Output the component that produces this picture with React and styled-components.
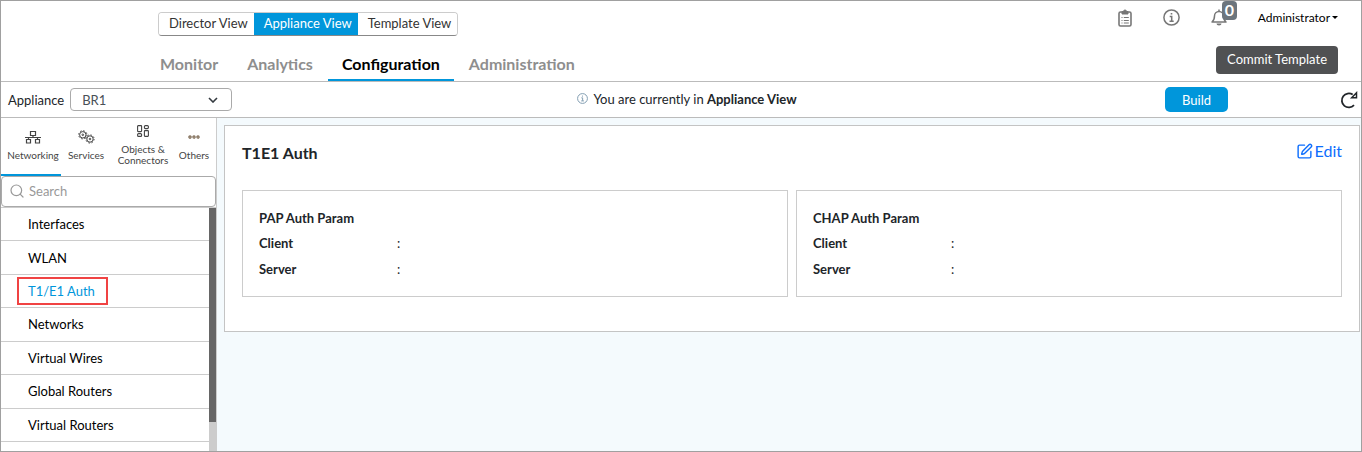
import React from 'react';
import styled, { createGlobalStyle, css } from 'styled-components';
import { Search, SquarePen } from 'lucide-react';

const views = ['Director View', 'Appliance View', 'Template View'];
const sections = ['Monitor', 'Analytics', 'Configuration', 'Administration'];
const menuItems = [
  'Interfaces',
  'WLAN',
  'T1/E1 Auth',
  'Networks',
  'Virtual Wires',
  'Global Routers',
  'Virtual Routers',
];
const params = ['PAP Auth Param', 'CHAP Auth Param'];

const ClipboardIcon = () => (
  <svg width="14" height="18" viewBox="0 0 14 18" fill="none" stroke="currentColor" strokeWidth="1.6">
    <rect x="1" y="3" width="12" height="14" rx="1.5" />
    <path d="M4 3.5V2.5h1.5a1.5 1.5 0 0 1 3 0H10v2.5H4z" fill="currentColor" strokeWidth="1" />
    <path d="M3.5 8.500h1M5.8 8.500h5M3.5 11.500h1M5.8 11.500h5M3.5 14h1M5.8 14h5" strokeWidth="1.1" />
  </svg>
);

const InfoIcon = ({ size }) => (
  <svg width={size} height={size} viewBox="0 0 17 17" fill="none" stroke="currentColor" strokeWidth="1.5">
    <circle cx="8.5" cy="8.5" r="7.6" />
    <path d="M6.700 7.500h2v4.500M6.500 12.200h4.200M7.700 4.800h1.600" />
  </svg>
);

const BellIcon = () => (
  <svg width="16" height="17" viewBox="0 0 16 17" fill="none" stroke="currentColor" strokeWidth="1.5">
    <path d="M1 13c2-1.600 2.500-3 2.500-6a4.500 4.500 0 0 1 9 0c0 3 .500 4.400 2.500 6z" strokeLinejoin="round" />
    <path d="M8 .5V2.500" />
    <path d="M5.500 14.500h5a2.500 2 0 0 1-5 0z" fill="currentColor" stroke="none" />
  </svg>
);

const RefreshIcon = () => (
  <svg width="18" height="18" viewBox="0 0 18 18" fill="none" stroke="currentColor" strokeWidth="1.8">
    <path d="M14 14.200A7 7 0 1 1 12.700 3.600" />
    <path d="M11.700 6.700h4.800V1.800z" strokeWidth="1.500" />
  </svg>
);

const NetworkIcon = () => (
  <svg width="16" height="14" viewBox="0 0 16 14" fill="none" stroke="currentColor" strokeWidth="1.2">
    <path d="M5.5 1.500h5v4h-5zM1.500 9.500h4v3.500h-4zM10.500 9.500h4v3.500h-4zM8 5.500v2M0 7.500h16M3.500 7.500v2M12.500 7.500v2" />
  </svg>
);

const GearsIcon = () => (
  <svg width="17" height="14" viewBox="0 0 17 14" fill="none" stroke="currentColor">
    <circle cx="4.800" cy="4.800" r="3.200" />
    <circle cx="4.800" cy="4.800" r="4.100" strokeDasharray="1.500 1.720" />
    <circle cx="4.800" cy="4.800" r=".8" />
    <circle cx="12" cy="9" r="3.200" />
    <circle cx="12" cy="9" r="4.100" strokeDasharray="1.500 1.720" />
    <circle cx="12" cy="9" r=".8" />
  </svg>
);

const ObjectsIcon = () => (
  <svg width="12" height="12" viewBox="0 0 12 12" fill="none" stroke="currentColor" strokeWidth="1.1">
    <rect x=".6" y=".6" width="4" height="6" rx=".6" />
    <rect x="7.400" y=".6" width="4" height="3" rx="1" />
    <rect x=".6" y="8.600" width="4" height="2.800" rx="1" />
    <rect x="7.400" y="5.600" width="4" height="5.800" rx=".6" />
  </svg>
);

const DotsIcon = () => (
  <svg width="12" height="4" viewBox="0 0 12 4" fill="none" stroke="#7a6650" strokeWidth="1.2">
    <circle cx="2" cy="2" r="1.100" />
    <circle cx="6" cy="2" r="1.100" />
    <circle cx="10" cy="2" r="1.100" />
  </svg>
);

const groups = [
  { label: 'Networking', icon: <NetworkIcon />, width: 60 },
  { label: 'Services', icon: <GearsIcon />, width: 50 },
  { label: 'Objects & Connectors', icon: <ObjectsIcon />, width: 64 },
  { label: 'Others', icon: <DotsIcon />, width: 38 },
];

const App = () => (
  <Page>
    <GlobalStyle />
    <Header>
      <Navigation>
        <ViewSwitch>
          {views.map((view) => (
            <ViewButton key={view} type="button" $active={view === 'Appliance View'}>{view}</ViewButton>
          ))}
        </ViewSwitch>
        <Sections>
          {sections.map((section) => (
            <SectionLink key={section} href="#" $active={section === 'Configuration'}>{section}</SectionLink>
          ))}
        </Sections>
      </Navigation>
      <Account>
        <AccountRow>
          <IconButton type="button" aria-label="Tasks"><ClipboardIcon /></IconButton>
          <IconButton type="button" aria-label="Information"><InfoIcon size={17} /></IconButton>
          <IconButton type="button" aria-label="Notifications">
            <BellIcon />
            <Badge>0</Badge>
          </IconButton>
          <UserButton type="button">Administrator</UserButton>
        </AccountRow>
        <CommitButton type="button">Commit Template</CommitButton>
      </Account>
    </Header>
    <Toolbar>
      <ApplianceField>
        <label htmlFor="appliance">Appliance</label>
        <SelectBox>
          <Select id="appliance" defaultValue="BR1">
            <option>BR1</option>
          </Select>
          <Chevron viewBox="0 0 10 6"><path d="M1 1l4 4 4-4" /></Chevron>
        </SelectBox>
      </ApplianceField>
      <Notice>
        <NoticeIcon><InfoIcon size={11} /></NoticeIcon>
        <span>You are currently in <b>Appliance View</b></span>
      </Notice>
      <ToolbarActions>
        <BuildButton type="button">Build</BuildButton>
        <RefreshButton type="button" aria-label="Refresh"><RefreshIcon /></RefreshButton>
      </ToolbarActions>
    </Toolbar>
    <Body>
      <Sidebar>
        <Groups>
          {groups.map(({ label, icon, width }) => (
            <GroupButton key={label} type="button" $width={width} $active={label === 'Networking'}>
              <GroupIcon>{icon}</GroupIcon>
              <span>{label}</span>
            </GroupButton>
          ))}
        </Groups>
        <SearchBox>
          <Search size={16} strokeWidth={1.8} />
          <SearchInput type="text" placeholder="Search" aria-label="Search" />
        </SearchBox>
        <MenuArea>
          <Menu>
            {menuItems.map((item) => (
              <MenuItem key={item}>
                <MenuLink href="#" $active={item === 'T1/E1 Auth'}>{item}</MenuLink>
              </MenuItem>
            ))}
          </Menu>
          <ScrollTrack><ScrollThumb /></ScrollTrack>
        </MenuArea>
      </Sidebar>
      <Main>
        <Panel>
          <PanelHeader>
            <Title>T1E1 Auth</Title>
            <EditButton type="button"><SquarePen size={17} />Edit</EditButton>
          </PanelHeader>
          <Cards>
            {params.map((param) => (
              <Card key={param}>
                <CardTitle>{param}</CardTitle>
                <Fields>
                  <dt>Client</dt>
                  <dd>:</dd>
                  <dt>Server</dt>
                  <dd>:</dd>
                </Fields>
              </Card>
            ))}
          </Cards>
        </Panel>
      </Main>
    </Body>
  </Page>
);

export default App;

const GlobalStyle = createGlobalStyle`
  * {
    box-sizing: border-box;
  }

  body {
    margin: 0;
    color: #212529;
    font: 13px/20px Lato, sans-serif;
  }

  button, input, select {
    font: inherit;
    color: inherit;
  }

  button {
    padding: 0;
    border: 0;
    background: none;
    cursor: pointer;
  }

  a {
    text-decoration: none;
  }
`;

const Page = styled.div`
  display: flex;
  flex-direction: column;
  height: 100vh;
  border: 1px solid #a0a0a0;
  overflow: hidden;
`;

const Header = styled.header`
  display: flex;
  justify-content: space-between;
  flex-shrink: 0;
  border-bottom: 1px solid #bbb;
  padding: 0 23px 0 157px;
`;

const Navigation = styled.div`
  display: flex;
  flex-direction: column;
  align-items: flex-start;
  padding-top: 11px;
`;

const ViewSwitch = styled.div`
  display: flex;
  height: 24px;
  border: 1px solid #ccc;
  border-bottom-color: #888;
  border-radius: 4px;
  overflow: hidden;
`;

const ViewButton = styled.button`
  padding: 0 6px 2px 10px;
  color: ${({ $active }) => ($active ? '#fff' : '#333')};
  background: ${({ $active }) => ($active ? '#0096db' : '#fff')};
`;

const Sections = styled.nav`
  display: flex;
  gap: 1px;
  margin-top: 13px;
`;

const SectionLink = styled.a`
  padding: 4px 14px 5px;
  border-bottom: 2px solid ${({ $active }) => ($active ? '#0096db' : 'transparent')};
  color: ${({ $active }) => ($active ? '#000' : '#8e8e8e')};
  font-size: 16px;
  font-weight: bold;
  line-height: 21px;

  &:first-child {
    padding-left: 2px;
  }
`;

const Account = styled.div`
  display: flex;
  flex-direction: column;
  align-items: flex-end;
`;

const AccountRow = styled.div`
  display: flex;
  align-items: center;
  gap: 31px;
  height: 33px;
  margin-bottom: 12px;
`;

const IconButton = styled.button`
  position: relative;
  display: flex;
  color: #777;
`;

const Badge = styled.span`
  position: absolute;
  top: -8px;
  left: 11px;
  width: 15px;
  height: 19px;
  border-radius: 4px;
  background: #6c757d;
  color: #fff;
  font-size: 16px;
  font-weight: bold;
  line-height: 17px;
`;

const UserButton = styled.button`
  display: flex;
  align-items: center;
  gap: 2px;
  color: #000;
  font-size: 12px;

  &::after {
    content: '';
    border: 3px solid transparent;
    border-top-color: #000;
    border-bottom: 0;
  }
`;

const CommitButton = styled.button`
  height: 28px;
  padding: 0 11px 2px;
  border-radius: 4px;
  background: #505153;
  color: #fff;
`;

const Toolbar = styled.div`
  display: grid;
  grid-template-columns: 1fr auto 1fr;
  align-items: center;
  flex-shrink: 0;
  height: 36px;
  border-bottom: 1px solid #bbb;
  padding: 0 3px 0 7px;
`;

const ApplianceField = styled.div`
  display: flex;
  align-items: center;
  gap: 6px;
`;

const SelectBox = styled.div`
  display: grid;
  align-items: center;
  width: 162px;

  > * {
    grid-area: 1 / 1;
  }
`;

const Select = styled.select`
  appearance: none;
  height: 23px;
  padding: 0 11px;
  border: 1px solid #aaa;
  border-radius: 4px;
  background: #fff;
  color: #495057;
`;

const Chevron = styled.svg`
  justify-self: end;
  width: 10px;
  height: 6px;
  margin-right: 14px;
  fill: none;
  stroke: #343a40;
  stroke-width: 1.6;
  pointer-events: none;
`;

const Notice = styled.div`
  display: flex;
  align-items: center;
  gap: 5px;
  padding: 0 0 2px 8px;
`;

const NoticeIcon = styled.span`
  display: flex;
  color: #7f9bb0;
`;

const ToolbarActions = styled.div`
  display: flex;
  align-items: center;
  justify-content: flex-end;
  gap: 112px;
`;

const BuildButton = styled.button`
  width: 63px;
  height: 25px;
  border-radius: 5px;
  background: #0096db;
  color: #fff;
`;

const RefreshButton = styled.button`
  display: flex;
`;

const Body = styled.div`
  display: flex;
  flex: 1;
  min-height: 0;
`;

const Sidebar = styled.aside`
  display: flex;
  flex-direction: column;
  flex-shrink: 0;
  width: 216px;
  border-right: 1px solid #ccc;
`;

const Groups = styled.div`
  display: flex;
  flex-shrink: 0;
  height: 58px;
`;

const GroupButton = styled.button`
  display: flex;
  flex-direction: column;
  align-items: center;
  justify-content: center;
  gap: 6px;
  width: ${({ $width }) => $width}px;
  padding-bottom: 2px;
  border-bottom: 2px solid ${({ $active }) => ($active ? '#0096db' : 'transparent')};
  color: #444;
  font-size: 10px;
  line-height: 11px;

  &:first-child {
    padding-left: 4px;
  }
`;

const GroupIcon = styled.span`
  display: flex;
  align-items: center;
  height: 14px;
`;

const SearchBox = styled.div`
  display: flex;
  align-items: center;
  gap: 4px;
  flex-shrink: 0;
  height: 31px;
  padding: 0 0 2px 7px;
  border: 1px solid #aaa;
  border-radius: 4px;
  color: #999;
`;

const SearchInput = styled.input`
  flex: 1;
  min-width: 0;
  padding: 0;
  border: 0;
  outline: 0;

  &::placeholder {
    color: #999;
  }
`;

const MenuArea = styled.div`
  display: flex;
  flex: 1;
  min-height: 0;
  overflow: hidden;
  border-top: 1px solid #ccc;
`;

const Menu = styled.ul`
  display: grid;
  grid-auto-rows: 1fr;
  flex: 1;
  height: 234px;
  margin: 0;
  padding: 0;
  list-style: none;
`;

const MenuItem = styled.li`
  display: flex;
  align-items: center;
  padding-left: 16px;
  border-bottom: 1px solid #ccc;
`;

const MenuLink = styled.a`
  padding: 2px 11px 2px 9px;
  border: 2px solid transparent;
  color: #000;

  ${({ $active }) => $active && css`
    border-color: #f04343;
    color: #0096db;
  `}
`;

const ScrollTrack = styled.div`
  width: 7px;
  background: #ccc;
`;

const ScrollThumb = styled.div`
  height: 88%;
  background: #666;
`;

const Main = styled.main`
  flex: 1;
  padding: 7px 1px 7px 7px;
  background: #f4fafd;
`;

const Panel = styled.section`
  padding: 16px 17px 34px;
  border: 1px solid #c4c4c4;
  background: #fff;
`;

const PanelHeader = styled.div`
  display: flex;
  align-items: flex-start;
  justify-content: space-between;
  height: 48px;
`;

const Title = styled.h1`
  margin: 0;
  font-size: 16px;
  font-weight: bold;
  line-height: 22px;
`;

const EditButton = styled.button`
  display: flex;
  align-items: center;
  gap: 2px;
  color: #0d6efd;
  font-size: 16px;
  line-height: 18px;
`;

const Cards = styled.div`
  display: grid;
  grid-template-columns: 1fr 1fr;
  gap: 8px;
`;

const Card = styled.article`
  padding: 17px 16px 14px;
  border: 1px solid #ccc;
`;

const CardTitle = styled.h2`
  margin: 0 0 2px;
  font-size: 13px;
  font-weight: bold;
  line-height: 20px;
`;

const Fields = styled.dl`
  display: grid;
  grid-template-columns: 138px 1fr;
  margin: 0;
  line-height: 26px;

  dt {
    font-weight: bold;
  }

  dd {
    margin: 0;
  }
`;
